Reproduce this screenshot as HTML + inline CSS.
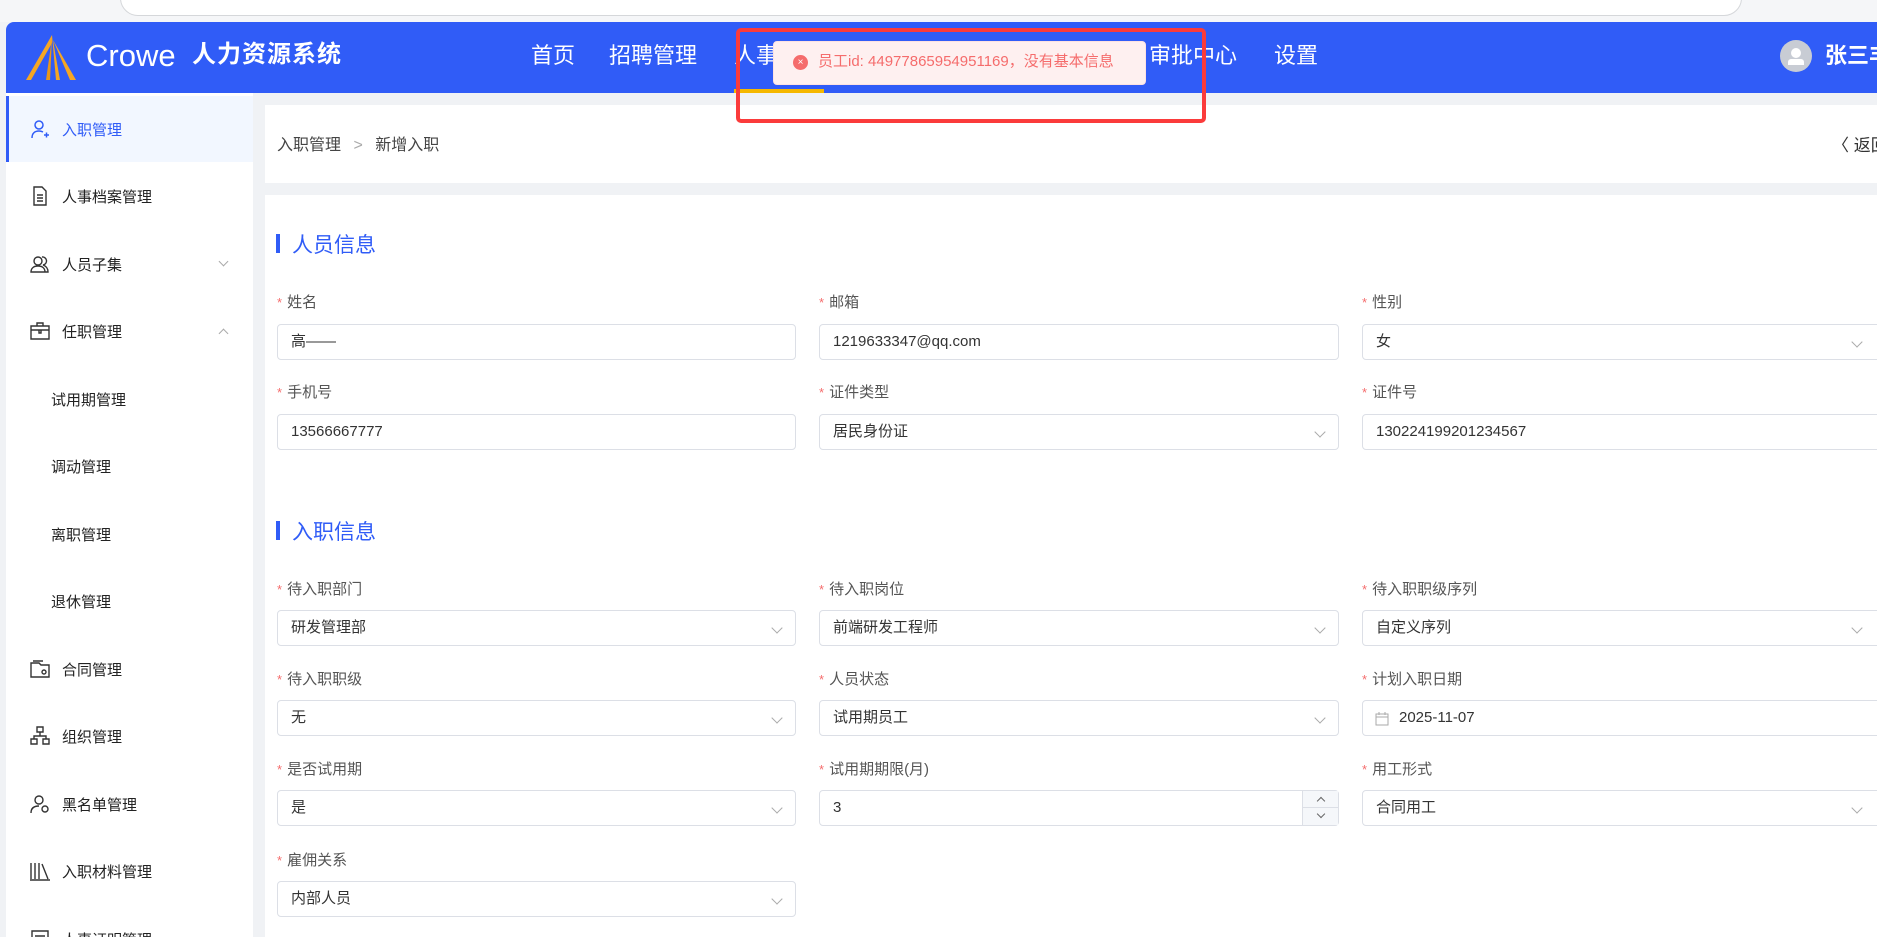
<!DOCTYPE html>
<html><head><meta charset="utf-8"><style>
*{box-sizing:border-box;margin:0;padding:0}
html,body{width:1877px;height:937px;overflow:hidden}
body{background:#f0f2f5;font-family:"Liberation Sans","Noto Sans CJK SC",sans-serif;position:relative}
#w{position:absolute;left:0;top:0;width:1877px;height:937px;overflow:hidden}
.abs{position:absolute}
.top{left:0;top:0;width:1877px;height:22px;background:#f5f6f8}
.addr{left:120px;top:-20px;width:1622px;height:36px;background:#fff;border:1px solid #d5d7da;border-radius:18px}
.hdr{left:6px;top:22px;width:1871px;height:71px;background:#305cf7;border-radius:8px 0 0 0}
.nav{top:40px;color:#fff;font-size:22px;line-height:32px}
.side{left:6px;top:93px;width:247px;height:844px;background:#fff;overflow:hidden}
.item{position:absolute;left:0;width:247px;height:66px;font-size:15px;color:#222;display:flex;align-items:center}
.item .ic{position:absolute;left:24px;top:23px;width:20px;height:20px}
.item span{position:absolute;left:56px}
.item.sub span{left:45px}
.card{background:#fff}
.lab{font-size:15px;color:#555;position:absolute}
.lab b{color:#f56c6c;font-weight:normal;margin-right:5px;font-size:13px}
.inp{position:absolute;height:36px;border:1px solid #dcdfe6;border-radius:4px;background:#fff;font-size:15px;color:#333;padding-left:13px;line-height:34px}
.arr{position:absolute;right:14px;top:13px;width:8px;height:8px;border-right:1px solid #aaa;border-bottom:1px solid #aaa;transform:rotate(45deg)}
.sec{position:absolute;left:276px;font-size:21px;color:#305cf7}
.sec i{position:absolute;left:0;top:5px;width:4px;height:19px;background:#305cf7}
.sec span{margin-left:16px}
</style></head><body><div id="w">
<div class="abs top"></div>
<div class="abs addr"></div>
<div class="abs hdr"></div>
<svg class="abs" style="left:26px;top:35px" width="54" height="45" viewBox="0 0 54 45"><path d="M26 0 L0 45 L5 45 L26 8 Z" fill="#f5a623"/><path d="M26 0 L30 45 L34 45 Z" fill="#f5a623"/><path d="M26 3 L20 45 L24 45 Z" fill="#e8961a"/><path d="M27 5 L44 45 L50 45 Z" fill="#f5a623"/></svg>
<div class="abs" style="left:86px;top:36px;color:#fff;font-size:31px;line-height:40px">Crowe</div>
<div class="abs" style="left:192px;top:39px;color:#fff;font-size:24px;font-weight:bold;line-height:32px;letter-spacing:1px">人力资源系统</div>
<div class="abs nav" style="left:531px">首页</div>
<div class="abs nav" style="left:609px">招聘管理</div>
<div class="abs nav" style="left:734px">人事管理</div>
<div class="abs nav" style="left:1149px">审批中心</div>
<div class="abs nav" style="left:1274px">设置</div>
<div class="abs" style="left:734px;top:89px;width:90px;height:4px;background:#f5b800"></div>
<div class="abs" style="left:1780px;top:40px;width:32px;height:32px;border-radius:50%;background:#c8ccd4"><div class="abs" style="left:11px;top:8px;width:10px;height:10px;border-radius:50%;background:#fff"></div><div class="abs" style="left:8px;top:19px;width:16px;height:6px;border-radius:3px 3px 0 0;background:#fff"></div></div>
<div class="abs" style="left:1825px;top:40px;color:#fff;font-size:22px;font-weight:bold;line-height:32px;white-space:nowrap">张三丰</div>
<!-- sidebar -->
<div class="abs side">
<div class="item" style="top:3px;background:#f2f7ff;border-left:3px solid #305cf7;color:#305cf7"><svg class="ic" style="left:21px" viewBox="0 0 20 20" fill="none" stroke="#305cf7" stroke-width="1.5"><circle cx="9" cy="6" r="4"/><path d="M2 19c0-5 3-7 7-7 2 0 3 .5 4 1M14 16h5M16.5 13.5v5"/></svg><span style="left:53px">入职管理</span></div>
<div class="item" style="top:70px"><svg class="ic" viewBox="0 0 20 20" fill="none" stroke="#333" stroke-width="1.4"><path d="M4 1h8l4 4v14H4z M7 9h6M7 12h6M7 15h6"/></svg><span>人事档案管理</span></div>
<div class="item" style="top:138px"><svg class="ic" viewBox="0 0 20 20" fill="none" stroke="#333" stroke-width="1.4"><circle cx="8" cy="7" r="4"/><path d="M1 18c0-4 3-6 7-6s7 2 7 6zM12 3a4 4 0 0 1 1 8c3 1 5 3 5 7h-3"/></svg><span>人员子集</span><div class="arr" style="right:26px;top:27px;width:7px;height:7px"></div></div>
<div class="item" style="top:205px"><svg class="ic" viewBox="0 0 20 20" fill="none" stroke="#333" stroke-width="1.4"><path d="M1 5h18v13H1zM7 5V2h6v3M1 9h18M9 9v3h2V9"/></svg><span>任职管理</span><div class="arr" style="right:26px;top:32px;width:7px;height:7px;transform:rotate(225deg)"></div></div>
<div class="item sub" style="top:273px"><span>试用期管理</span></div>
<div class="item sub" style="top:340px"><span>调动管理</span></div>
<div class="item sub" style="top:408px"><span>离职管理</span></div>
<div class="item sub" style="top:475px"><span>退休管理</span></div>
<div class="item" style="top:543px"><svg class="ic" viewBox="0 0 20 20" fill="none" stroke="#333" stroke-width="1.4"><path d="M1 4h8l2 2h8v12H1zM3 2h10"/><circle cx="14" cy="13" r="2"/></svg><span>合同管理</span></div>
<div class="item" style="top:610px"><svg class="ic" viewBox="0 0 20 20" fill="none" stroke="#333" stroke-width="1.4"><path d="M7 1h6v5H7zM1 13h6v5H1zM13 13h6v5h-6zM10 6v4M4 13v-3h12v3"/></svg><span>组织管理</span></div>
<div class="item" style="top:678px"><svg class="ic" viewBox="0 0 20 20" fill="none" stroke="#333" stroke-width="1.4"><circle cx="9" cy="6" r="4"/><path d="M1 19c0-5 3-7 8-7"/><circle cx="15" cy="15" r="3"/></svg><span>黑名单管理</span></div>
<div class="item" style="top:745px"><svg class="ic" viewBox="0 0 20 20" fill="none" stroke="#333" stroke-width="1.4"><path d="M1 2v16M5 2v16M9 2v16M12 3l6 15M0 19h20"/></svg><span>入职材料管理</span></div>
<div class="item" style="top:813px"><svg class="ic" viewBox="0 0 20 20" fill="none" stroke="#333" stroke-width="1.4"><path d="M2 2h16v16H2zM5 7h10M5 11h6"/></svg><span>人事证明管理</span></div>
</div>
<!-- breadcrumb -->
<div class="abs card" style="left:265px;top:105px;width:1612px;height:78px"></div>
<div class="abs" style="left:277px;top:135px;font-size:16px;color:#444;line-height:22px">入职管理 <span style="color:#aaa;margin:0 8px">&gt;</span> 新增入职</div>
<div class="abs" style="left:1832px;top:135px;font-size:17px;color:#333;line-height:22px;white-space:nowrap">〈 返回</div>
<!-- form card -->
<div class="abs card" style="left:265px;top:195px;width:1612px;height:742px"></div>
<div class="sec" style="top:229px"><i></i><span>人员信息</span></div>
<div class="lab" style="left:277px;top:291px"><b>*</b>姓名</div>
<div class="lab" style="left:819px;top:291px"><b>*</b>邮箱</div>
<div class="lab" style="left:1362px;top:291px"><b>*</b>性别</div>
<div class="inp" style="left:277px;top:324px;width:519px">高——</div>
<div class="inp" style="left:819px;top:324px;width:520px">1219633347@qq.com</div>
<div class="inp" style="left:1362px;top:324px;width:530px">女<div class="arr" style="right:30px"></div></div>
<div class="lab" style="left:277px;top:381px"><b>*</b>手机号</div>
<div class="lab" style="left:819px;top:381px"><b>*</b>证件类型</div>
<div class="lab" style="left:1362px;top:381px"><b>*</b>证件号</div>
<div class="inp" style="left:277px;top:414px;width:519px">13566667777</div>
<div class="inp" style="left:819px;top:414px;width:520px">居民身份证<div class="arr"></div></div>
<div class="inp" style="left:1362px;top:414px;width:530px">130224199201234567</div>

<div class="sec" style="top:516px"><i></i><span>入职信息</span></div>
<div class="lab" style="left:277px;top:578px"><b>*</b>待入职部门</div>
<div class="lab" style="left:819px;top:578px"><b>*</b>待入职岗位</div>
<div class="lab" style="left:1362px;top:578px"><b>*</b>待入职职级序列</div>
<div class="inp" style="left:277px;top:610px;width:519px">研发管理部<div class="arr"></div></div>
<div class="inp" style="left:819px;top:610px;width:520px">前端研发工程师<div class="arr"></div></div>
<div class="inp" style="left:1362px;top:610px;width:530px">自定义序列<div class="arr" style="right:30px"></div></div>
<div class="lab" style="left:277px;top:668px"><b>*</b>待入职职级</div>
<div class="lab" style="left:819px;top:668px"><b>*</b>人员状态</div>
<div class="lab" style="left:1362px;top:668px"><b>*</b>计划入职日期</div>
<div class="inp" style="left:277px;top:700px;width:519px">无<div class="arr"></div></div>
<div class="inp" style="left:819px;top:700px;width:520px">试用期员工<div class="arr"></div></div>
<div class="inp" style="left:1362px;top:700px;width:530px;padding-left:36px"><svg class="abs" style="left:12px;top:11px" width="14" height="14" viewBox="0 0 14 14" fill="none" stroke="#aaa"><rect x="1" y="2" width="12" height="11"/><path d="M1 5h12M4 0v3M10 0v3"/></svg>2025-11-07</div>
<div class="lab" style="left:277px;top:758px"><b>*</b>是否试用期</div>
<div class="lab" style="left:819px;top:758px"><b>*</b>试用期期限(月)</div>
<div class="lab" style="left:1362px;top:758px"><b>*</b>用工形式</div>
<div class="inp" style="left:277px;top:790px;width:519px">是<div class="arr"></div></div>
<div class="inp" style="left:819px;top:790px;width:520px">3<div class="abs" style="right:0;top:0;width:36px;height:34px;background:#f5f7fa;border-left:1px solid #dcdfe6"><div class="abs" style="left:0;top:16px;width:36px;height:1px;background:#dcdfe6"></div><div class="abs" style="left:15px;top:7px;width:6px;height:6px;border-left:1px solid #666;border-top:1px solid #666;transform:rotate(45deg)"></div><div class="abs" style="left:15px;top:20px;width:6px;height:6px;border-right:1px solid #666;border-bottom:1px solid #666;transform:rotate(45deg)"></div></div></div>
<div class="inp" style="left:1362px;top:790px;width:530px">合同用工<div class="arr" style="right:30px"></div></div>
<div class="lab" style="left:277px;top:849px"><b>*</b>雇佣关系</div>
<div class="inp" style="left:277px;top:881px;width:519px">内部人员<div class="arr"></div></div>
<!-- toast -->
<div class="abs" style="left:773px;top:41px;width:373px;height:44px;background:#fef0f0;border:1px solid #fde2e2;border-radius:4px;z-index:5"></div>
<div class="abs" style="left:793px;top:55px;width:15px;height:15px;border-radius:50%;background:#f56c6c;color:#fff;font-size:10px;line-height:15px;text-align:center;z-index:6">×</div>
<div class="abs" style="left:818px;top:52px;font-size:15px;color:#f56c6c;line-height:20px;white-space:nowrap;z-index:6">员工id: 449778659549511​69，没有基本信息</div>
<div class="abs" style="left:736px;top:28px;width:470px;height:95px;border:4px solid #fb3b3b;border-radius:5px;z-index:7"></div>
</div></body></html>
